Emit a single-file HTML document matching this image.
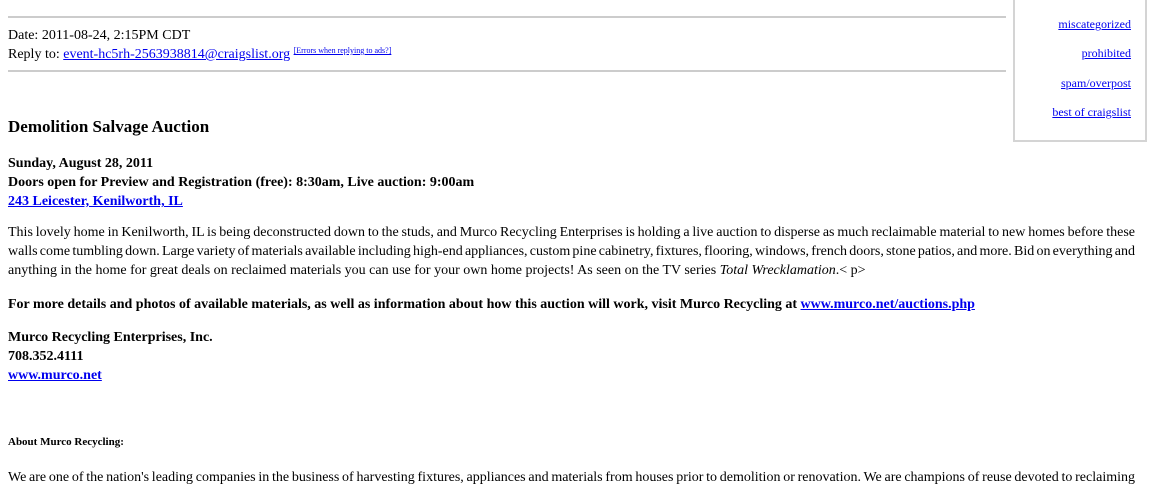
<!DOCTYPE html>
<html><head><style>
body{margin:0;width:1160px;height:480px;overflow:hidden;background:#fff;font-family:"Liberation Serif",serif;font-size:14px;color:#000;position:relative}
.a{position:absolute;white-space:nowrap;line-height:19px}
a{color:#00e}
.hr{position:absolute;left:8px;width:998px;height:0;border-top:2px solid #ccc}
.box{position:absolute;left:1013px;top:-10px;width:130px;height:150px;border:2px solid #d4d4d4;border-top:none}
.r{position:absolute;right:29px;font-size:12px;white-space:nowrap}
.j{position:absolute;left:8px;width:1127px;text-align:justify;text-align-last:justify;white-space:nowrap;line-height:19px;word-spacing:-2.5px}
sup{line-height:0;vertical-align:5px}
</style></head><body>
<div class="box"></div>
<div class="r" style="top:17px"><a href="#">miscategorized</a></div>
<div class="r" style="top:46px"><a href="#">prohibited</a></div>
<div class="r" style="top:76px"><a href="#">spam/overpost</a></div>
<div class="r" style="top:105px"><a href="#">best of craigslist</a></div>
<div class="hr" style="top:16px"></div>
<div class="a" style="left:8px;top:26px">Date: 2011-08-24, 2:15PM CDT</div>
<div class="a" style="left:8px;top:45px">Reply to: <a href="#">event-hc5rh-2563938814@craigslist.org</a> <sup style="font-size:8px"><a href="#">[Errors when replying to ads?]</a></sup></div>
<div class="hr" style="top:70px"></div>
<div class="a" style="left:8px;top:117px;font-size:17px;font-weight:bold">Demolition Salvage Auction</div>
<div class="a" style="left:8px;top:154px;font-weight:bold">Sunday, August 28, 2011</div>
<div class="a" style="left:8px;top:173px;font-weight:bold">Doors open for Preview and Registration (free): 8:30am, Live auction: 9:00am</div>
<div class="a" style="left:8px;top:192px;font-weight:bold"><a href="#">243 Leicester, Kenilworth, IL</a></div>
<div class="j" style="top:223px">This lovely home in Kenilworth, IL is being deconstructed down to the studs, and Murco Recycling Enterprises is holding a live auction to disperse as much reclaimable material to new homes before these</div>
<div class="j" style="top:242px">walls come tumbling down. Large variety of materials available including high-end appliances, custom pine cabinetry, fixtures, flooring, windows, french doors, stone patios, and more. Bid on everything and</div>
<div class="a" style="left:8px;top:261px">anything in the home for great deals on reclaimed materials you can use for your own home projects! As seen on the TV series <i>Total Wrecklamation</i>.&lt; p&gt;</div>
<div class="a" style="left:8px;top:295px;font-weight:bold">For more details and photos of available materials, as well as information about how this auction will work, visit Murco Recycling at <a href="#">www.murco.net/auctions.php</a></div>
<div class="a" style="left:8px;top:328px;font-weight:bold">Murco Recycling Enterprises, Inc.</div>
<div class="a" style="left:8px;top:347px;font-weight:bold">708.352.4111</div>
<div class="a" style="left:8px;top:366px;font-weight:bold"><a href="#">www.murco.net</a></div>
<div class="a" style="left:8px;top:433px;font-weight:bold;font-size:11px">About Murco Recycling:</div>
<div class="j" style="top:468px">We are one of the nation's leading companies in the business of harvesting fixtures, appliances and materials from houses prior to demolition or renovation. We are champions of reuse devoted to reclaiming</div>
</body></html>
